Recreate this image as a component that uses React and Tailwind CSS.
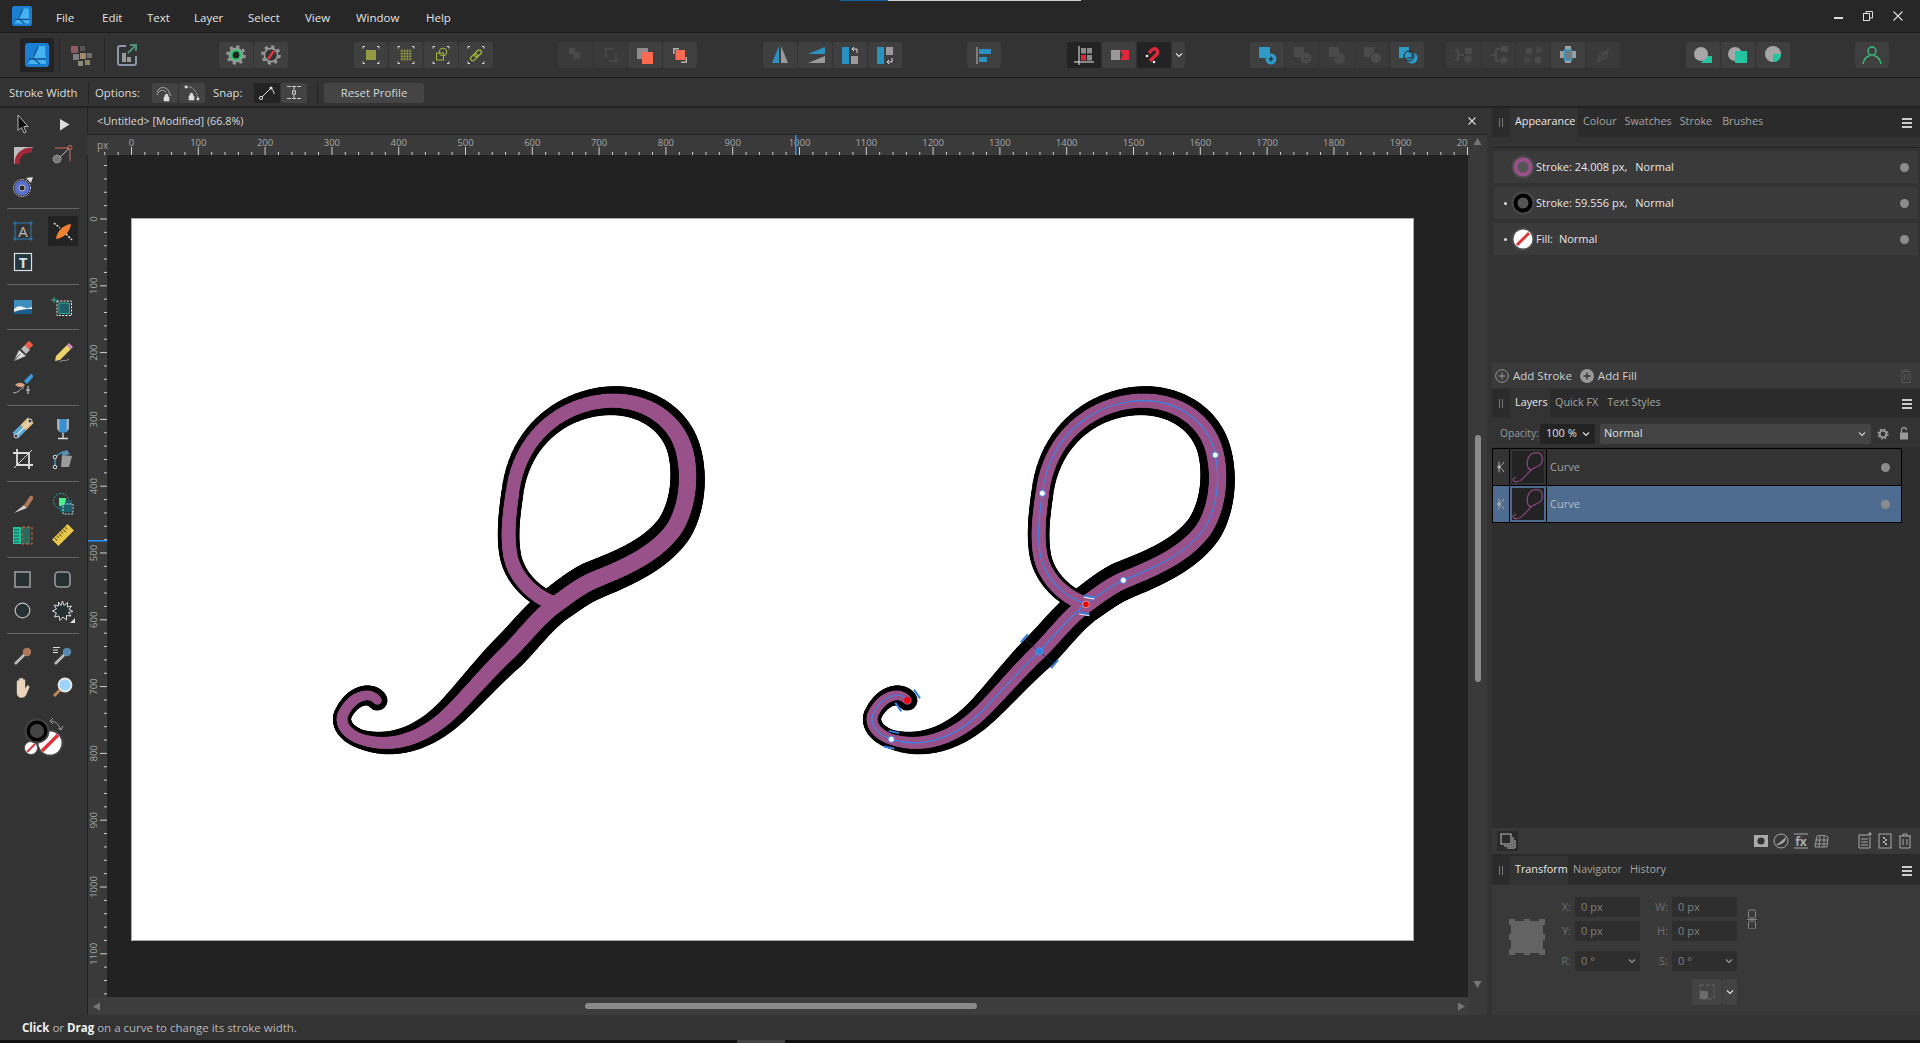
import React from 'react';

const SEGS = [
  [172, 991, 62, 26],
  [150, 962, 95, 975, 68, 1035, 54, 32],
  [58, 1068, 88, 1096, 124, 1108, 56, 32],
  [200, 1132, 300, 1120, 400, 1020, 92, 44],
  [452, 968, 512, 896, 568, 844, 112, 48],
  [612, 800, 655, 742, 708, 703, 110, 50],
  [740, 680, 780, 648, 820, 631, 116, 50],
  [900, 598, 1000, 560, 1060, 480, 110, 50],
  [1100, 420, 1112, 330, 1096, 255, 100, 52],
  [1075, 150, 980, 92, 880, 92, 87, 42],
  [750, 92, 600, 180, 577, 370, 66, 40],
  [570, 420, 560, 490, 570, 550, 64, 42],
  [580, 620, 640, 680, 708, 703, 60, 44],
];

const CURVE_D = 'M172 991' + SEGS.slice(1).map((s) => `C${s[0]} ${s[1]} ${s[2]} ${s[3]} ${s[4]} ${s[5]}`).join('');

// sample the beziers so the stroke width can change along the curve
function sampleCurve() {
  const out = [{ x: 172, y: 991, b: 62, p: 26 }];
  for (let i = 1; i < SEGS.length; i++) {
    const s = SEGS[i];
    const prev = SEGS[i - 1];
    const x0 = i === 1 ? prev[0] : prev[4];
    const y0 = i === 1 ? prev[1] : prev[5];
    const b0 = i === 1 ? prev[2] : prev[6];
    const p0 = i === 1 ? prev[3] : prev[7];
    for (let k = 1; k <= 24; k++) {
      const t = k / 24;
      const u = 1 - t;
      out.push({
        x: u * u * u * x0 + 3 * u * u * t * s[0] + 3 * u * t * t * s[2] + t * t * t * s[4],
        y: u * u * u * y0 + 3 * u * u * t * s[1] + 3 * u * t * t * s[3] + t * t * t * s[5],
        b: b0 + (s[6] - b0) * t,
        p: p0 + (s[7] - p0) * t,
      });
    }
  }
  return out;
}

const POINTS = sampleCurve();

function VarStroke({ k, color }) {
  return POINTS.slice(1).map((pt, i) => (
    <line key={i} x1={POINTS[i].x} y1={POINTS[i].y} x2={pt.x} y2={pt.y} stroke={color} strokeWidth={pt[k]} strokeLinecap="round" />
  ));
}

function Handle({ x, y, r, line }) {
  return (
    <g transform={`translate(${x} ${y}) rotate(${r})`}>
      <rect x="-16" y="-3" width="32" height="6" fill="#2f80e0" />
      {line && <rect x="-16" y="3" width="32" height="3" fill="#fff" />}
    </g>
  );
}

function Node({ x, y, fill }) {
  return <circle cx={x} cy={y} r="9" fill={fill} stroke="#4b8be0" strokeWidth="3" />;
}

function Artwork() {
  return (
    <svg width="1281" height="721" viewBox="0 0 1281 721" className="absolute inset-0">
      <g transform="translate(188 151) scale(0.33333)">
        <VarStroke k="b" color="#000" />
        <VarStroke k="p" color="#985189" />
      </g>
      <g transform="translate(718 151) scale(0.33333)">
        <VarStroke k="b" color="#000" />
        <VarStroke k="p" color="#985189" />
        <path d={CURVE_D} stroke="#3a86e8" strokeWidth="3.5" fill="none" />
        <line x1="520" y1="805" x2="612" y2="882" stroke="#1c3350" strokeWidth="2.5" />
        <Handle x={718} y={680} r={10} line />
        <Handle x={703} y={730} r={10} line />
        <Handle x={523} y={805} r={-50} />
        <Handle x={614} y={882} r={-50} />
        <Handle x={201} y={972} r={55} />
        <Handle x={145} y={1011} r={55} />
        <Handle x={132} y={1086} r={12} />
        <Handle x={117} y={1133} r={12} />
        <Node x={577} y={370} fill="#fff" />
        <Node x={1096} y={255} fill="#fff" />
        <Node x={820} y={631} fill="#fff" />
        <Node x={124} y={1108} fill="#fff" />
        <circle cx="568" cy="844" r="11" fill="#2f80e0" stroke="#5a9ae8" strokeWidth="2" />
        <circle cx="708" cy="703" r="10" fill="#f00000" stroke="#fff" strokeWidth="1.5" />
        <circle cx="172" cy="991" r="10" fill="#f00000" stroke="#d03060" strokeWidth="1.5" />
      </g>
    </svg>
  );
}

function HRuler() {
  const ticks = [];
  for (let u = -40; u <= 2000; u += 20) ticks.push(u);
  return (
    <svg width="1381" height="20" className="block shrink-0 bg-[#3a3a3a]">
      <defs>
        <clipPath id="hclip">
          <rect x="20" y="0" width="1361" height="20" />
        </clipPath>
      </defs>
      <text x="10" y="14" fontSize="10" fill="#a0a0a0" fontFamily="Open Sans">px</text>
      {ticks.map((u) => {
        const x = 44.5 + u * 0.668;
        return <line key={u} x1={x} x2={x} y1={u % 100 === 0 ? 12 : 17} y2="20" stroke="#d0d0d0" />;
      })}
      <g clipPath="url(#hclip)">
        {ticks.filter((u) => u % 100 === 0 && u >= 0).map((u) => (
          <text key={u} x={44.5 + u * 0.668} y="11" fontSize="9.5" fill="#a8a8a8" textAnchor="middle" fontFamily="Open Sans">{u}</text>
        ))}
      </g>
      <rect x="708" y="0" width="1.5" height="20" fill="#1e96ff" />
    </svg>
  );
}

function VRuler() {
  const ticks = [];
  for (let u = -80; u <= 1240; u += 20) ticks.push(u);
  return (
    <svg width="20" height="842" className="block shrink-0 bg-[#3a3a3a] border-l border-[#222]">
      {ticks.map((u) => {
        const y = 64 + u * 0.668;
        return <line key={u} y1={y} y2={y} x1={u % 100 === 0 ? 12 : 16} x2="20" stroke="#d0d0d0" />;
      })}
      {ticks.filter((u) => u % 100 === 0 && u >= 0 && u <= 1100).map((u) => {
        const y = 64 + u * 0.668;
        return (
          <text key={u} transform={`translate(9 ${y}) rotate(-90)`} fontSize="9.5" fill="#a8a8a8" textAnchor="middle" fontFamily="Open Sans">{u}</text>
        );
      })}
      <rect x="0" y="385" width="20" height="1.5" fill="#1e96ff" />
    </svg>
  );
}

const Dots = ({ n = 5, c = '#d6e04a', x = 17, y = 13, g = 2, sz = 1.1 }) => {
  const out = [];
  for (let i = 0; i < n; i++) for (let j = 0; j < n; j++) {
    out.push(<rect key={`${i}-${j}`} x={x - ((n - 1) * g) / 2 + i * g - sz / 2} y={y - ((n - 1) * g) / 2 + j * g - sz / 2} width={sz} height={sz} fill={c} />);
  }
  return out;
};

const Brackets = () => (
  <path d="M11 4.5H9V6.5M23 4.5H25V6.5M11 21.5H9V19.5M23 21.5H25V19.5" stroke="#ddd" strokeWidth="1" fill="none" />
);

const Gear = ({ children }) => (
  <>
    <circle cx="17" cy="13" r="7.5" fill="#9a9a9a" />
    <circle cx="17" cy="13" r="8.6" fill="none" stroke="#9a9a9a" strokeWidth="2.4" strokeDasharray="3.2 3.55" />
    {children}
  </>
);

// Toolbar icon shapes, drawn in the 34x26 box of a button
const TB = {
  settingsOn: <Gear><circle cx="17" cy="13" r="4.6" fill="#222" stroke="#2ec56f" strokeWidth="2.4" /></Gear>,
  settingsOff: <Gear><circle cx="17" cy="13" r="5.8" fill="#333" /><path d="M14 17L20 9" stroke="#e2383f" strokeWidth="2.4" /></Gear>,
  snap1: <><Brackets /><Dots sz={1.5} /></>,
  snap2: <><Brackets /><Dots n={7} g={1.6} sz={0.9} c="#cfd64a" /></>,
  snap3: <><Brackets /><rect x="12.5" y="11" width="7" height="7" stroke="#a6b934" fill="none" /><circle cx="19" cy="10" r="3.8" stroke="#a6b934" fill="none" /></>,
  snap4: <><Brackets /><g transform="rotate(-45 17 13)" stroke="#a6b934" fill="none" strokeWidth="1.2"><rect x="10" y="11" width="8" height="4.5" rx="2.2" /><rect x="15.5" y="11" width="8" height="4.5" rx="2.2" /></g></>,
  order1: <><rect x="11" y="6" width="6" height="6" fill="#4c4c4c" /><rect x="15" y="10" width="7" height="7" fill="#484848" /></>,
  order2: <><path d="M12 6h8v2h-6v8h-2z" fill="#484848" /><path d="M24 12v8h-8v-2h6v-6z" fill="#484848" /></>,
  order3: <><rect x="9" y="6" width="11" height="11" fill="#8c8c8c" /><rect x="14" y="10" width="11" height="12" fill="#fc6a54" /></>,
  order4: <><path d="M10 6h6v1.5h-4.5V12H10zM24 21h-6v-1.5h4.5V15H24z" fill="#b0b0b0" /><rect x="12.5" y="8" width="9.5" height="10" fill="#fc6a54" /></>,
  flipH: <><path d="M16 4V21H9z" fill="#2b91c0" /><path d="M18 4V21H25z" fill="#9a9a9a" /></>,
  flipV: <><path d="M27 5V12H10z" fill="#2b91c0" /><path d="M27 14V21H10z" fill="#9a9a9a" /></>,
  rotL: <><rect x="9" y="5" width="7" height="17" fill="#2b91c0" /><rect x="18" y="14" width="7" height="8" fill="#9a9a9a" /><path d="M24 11V7H19M21 5L19 7L21 9" stroke="#ddd" fill="none" /></>,
  rotR: <><rect x="9" y="5" width="7" height="17" fill="#2b91c0" /><rect x="18" y="5" width="7" height="8" fill="#9a9a9a" /><path d="M24 16V20H19M21 18L19 20L21 22" stroke="#ddd" fill="none" /></>,
  align: <><path d="M10 5V22" stroke="#bbb" /><rect x="12" y="7" width="12" height="5" fill="#2b91c0" /><rect x="12" y="15" width="8" height="5" fill="#2b91c0" /></>,
  grid: <><path d="M12 4V23M7 20H27" stroke="#eee" /><rect x="14" y="6" width="5" height="5.5" fill="#8c8c8c" /><rect x="20" y="6" width="5" height="5.5" fill="#8c8c8c" /><rect x="14" y="13" width="5" height="5.5" fill="#e0283c" /><rect x="20" y="13" width="5" height="5.5" fill="#8c8c8c" /></>,
  snapShape: <><rect x="9" y="8" width="9" height="10" fill="#999" /><path d="M18 8H27V18H18L21 13z" fill="#e0283c" /></>,
  magnet: <><path d="M13 19L20 12A3 3 0 0 0 15 8" stroke="#e0283c" strokeWidth="3.4" fill="none" /><path d="M15 8l-3 3" stroke="#e0283c" strokeWidth="3.4" /><circle cx="10" cy="14" r="1.3" fill="#eee" /><circle cx="17" cy="20" r="1.3" fill="#eee" /></>,
  add: <><rect x="9" y="5" width="11" height="11" fill="#2f9ac6" rx="1" /><circle cx="21" cy="17" r="5.5" fill="#2f9ac6" /><path d="M18.5 17H23.5M21 14.5V19.5" stroke="#222" strokeWidth="1.2" /></>,
  dis1: <><rect x="9" y="5" width="10" height="10" fill="#4a4a4a" /><circle cx="21" cy="16" r="5.5" fill="#4a4a4a" /><path d="M18 16.5h6" stroke="#3a3a3a" /></>,
  dis2: <><rect x="9" y="5" width="10" height="10" fill="#4a4a4a" /><path d="M19 11a5.5 5.5 0 1 1-5 5h5z" fill="#484848" /></>,
  dis3: <><rect x="9" y="5" width="10" height="10" fill="#4a4a4a" /><circle cx="21" cy="16" r="5.5" fill="#4d4d4d" stroke="#3a3a3a" /></>,
  divide: <><rect x="9" y="5" width="10" height="11" fill="#2f9ac6" /><circle cx="22" cy="16" r="5.6" fill="#2f9ac6" /><path d="M17 16h5V11" stroke="#222" fill="none" /><circle cx="19" cy="14" r="5" stroke="#222" fill="none" /></>,
  dis5: <><path d="M9 8h3v10H9M12 13h6" stroke="#5a5a5a" fill="none" /><rect x="19" y="6" width="7" height="6" fill="#4a4a4a" /><circle cx="22" cy="17" r="3.5" fill="#4a4a4a" /></>,
  dis6: <><path d="M15 7V19M10 13H15M15 7h5M15 19h5" stroke="#5a5a5a" fill="none" /><rect x="20" y="4" width="7" height="6" fill="#4a4a4a" /><circle cx="23" cy="18" r="3.5" fill="#4a4a4a" /></>,
  dis7: <><circle cx="13" cy="9" r="3.5" fill="#4a4a4a" /><rect x="20" y="5" width="6" height="6" fill="#454545" /><rect x="8" y="15" width="6" height="6" fill="#454545" /><circle cx="22" cy="18" r="3.5" fill="#4a4a4a" /></>,
  transform: <><path d="M9 9h5V4h6v5h5v7h-5v5h-6v-5H9z" fill="#a0a0a0" /><rect x="13.5" y="8" width="7" height="10" fill="#7a7a7a" stroke="#2f9ac6" strokeWidth="1.5" /></>,
  dis9: <path d="M10 20L24 7M13 13l8-4v6l-8 4z" stroke="#494949" fill="none" strokeWidth="1.5" />,
  bool1: <><path d="M21 14h5v7H15z" fill="#23c4a2" /><circle cx="15" cy="12" r="7" fill="#a6a6a6" /></>,
  bool2: <><circle cx="14" cy="12" r="7" fill="#a6a6a6" /><rect x="14" y="9" width="12" height="12" fill="#23c4a2" /></>,
  bool3: <><circle cx="17" cy="12" r="8" fill="#a6a6a6" /><path d="M17 12h8c0 5-2.5 7-6.5 8H17z" fill="#23c4a2" /></>,
  user: <><circle cx="17" cy="9" r="4" stroke="#35c27c" strokeWidth="1.4" fill="none" /><path d="M8 22C9 16 13 14 15 13.5M26 22C25 16 21 14 19 13.5" stroke="#35c27c" strokeWidth="1.4" fill="none" /></>,
};

function Btn({ name, dark, w = 34, dim }) {
  return (
    <div className={`h-[26px] rounded-[2px] shrink-0 ${dark ? 'bg-[#232323]' : dim ? 'bg-[#3a3a3a]' : 'bg-[#3f3f3f]'}`} style={{ width: w }}>
      {name && <svg viewBox="0 0 34 26" width="34" height="26">{TB[name]}</svg>}
    </div>
  );
}

function Group({ ml, children }) {
  return <div className="flex gap-[1px] shrink-0" style={{ marginLeft: ml }}>{children}</div>;
}

function Toolbar() {
  return (
    <div className="h-[44px] bg-[#333] flex items-center pl-[20px] shrink-0">
      <div className="w-[34px] h-[34px] bg-[#232323] rounded-[2px] flex items-center justify-center shrink-0">
        <LogoMark size={24} />
      </div>
      <div className="w-[1px] h-[34px] bg-[#232323] ml-[5px] shrink-0" />
      <div className="w-[44px] flex justify-center shrink-0">
        <svg width="22" height="26" viewBox="0 0 22 26">
          <rect x="0" y="4" width="7" height="7" fill="#8d5c63" rx="1" />
          <rect x="9" y="4" width="5" height="5" fill="#565656" />
          <rect x="2" y="12" width="6" height="6" fill="#7c7f84" />
          <rect x="9" y="11" width="6" height="6" fill="#9c8a6c" />
          <rect x="16" y="11" width="5" height="5" fill="#6f6f6f" />
          <rect x="7" y="19" width="5" height="5" fill="#8a8a7a" />
          <rect x="14" y="18" width="5" height="5" fill="#8f8463" />
        </svg>
      </div>
      <div className="w-[1px] h-[34px] bg-[#232323] shrink-0" />
      <div className="w-[44px] flex justify-center shrink-0">
        <svg width="22" height="26" viewBox="0 0 22 26" fill="none">
          <path d="M10 4H4a2 2 0 0 0-2 2v15a2 2 0 0 0 2 2h14a2 2 0 0 0 2-2v-7" stroke="#8e95ad" strokeWidth="2" />
          <rect x="6" y="11" width="4" height="9" fill="#9a9a9a" />
          <rect x="11" y="15" width="4" height="5" fill="#9a9a9a" />
          <path d="M12 11L19 4M14 3H20V9" stroke="#4f8f78" strokeWidth="2" />
        </svg>
      </div>
      <Group ml={70}><Btn name="settingsOn" /><Btn name="settingsOff" /></Group>
      <Group ml={66}><Btn name="snap1" /><Btn name="snap2" /><Btn name="snap3" /><Btn name="snap4" /></Group>
      <Group ml={65}><Btn name="order1" dim /><Btn name="order2" dim /><Btn name="order3" /><Btn name="order4" /></Group>
      <Group ml={66}><Btn name="flipH" /><Btn name="flipV" /><Btn name="rotL" /><Btn name="rotR" /></Group>
      <Group ml={65}><Btn name="align" /></Group>
      <Group ml={66}>
        <Btn name="grid" dark />
        <Btn name="snapShape" />
        <Btn name="magnet" dark />
        <div className="w-[13px] h-[26px] bg-[#3f3f3f] rounded-[2px] flex items-center justify-center">
          <Chevron />
        </div>
      </Group>
      <Group ml={65}><Btn name="add" /><Btn name="dis1" dim /><Btn name="dis2" dim /><Btn name="dis3" dim /><Btn name="divide" /></Group>
      <Group ml={22}><Btn name="dis5" dim /><Btn name="dis6" dim /><Btn name="dis7" dim /><Btn name="transform" /><Btn name="dis9" dim /></Group>
      <Group ml={66}><Btn name="bool1" /><Btn name="bool2" /><Btn name="bool3" /></Group>
      <Group ml={65}><Btn name="user" /></Group>
    </div>
  );
}

const Chevron = ({ c = '#ddd' }) => (
  <svg width="8" height="6" viewBox="0 0 8 6" fill="none"><path d="M1 1.5L4 4.5L7 1.5" stroke={c} strokeWidth="1.2" /></svg>
);

function LogoMark({ size }) {
  return (
    <svg width={size} height={size} viewBox="0 0 24 24">
      <rect x="0" y="0" width="24" height="24" rx="3" fill="#1a7fd0" />
      <path d="M3 21L14 3H20L21 21z" fill="#46b4f0" />
      <path d="M4 16H21M13 4L8 15L15 21" stroke="#0d4f8c" strokeWidth="1.3" fill="none" />
    </svg>
  );
}

function MenuBar() {
  const widths = { File: 46, Edit: 45, Text: 47, Layer: 54, Select: 57, View: 51, Window: 70, Help: 30 };
  return (
    <div className="h-[32px] bg-[#272727] flex items-center shrink-0 relative text-[11.5px] text-[#e4e4e4]">
      <div className="absolute top-0 left-[840px] w-[48px] h-[1px] bg-[#14629f]" />
      <div className="absolute top-0 left-[888px] w-[193px] h-[1px] bg-[#cfcfcf]" />
      <div className="w-[56px] pl-[12px] shrink-0"><LogoMark size={20} /></div>
      {Object.keys(widths).map((t) => (
        <div key={t} style={{ width: widths[t] }} className="shrink-0 pt-[3px]">{t}</div>
      ))}
      <div className="ml-auto flex items-center pr-[7px]">
        <div className="w-[30px] flex justify-center"><div className="w-[9px] h-[2px] bg-[#ddd] mt-[4px]" /></div>
        <div className="w-[30px] flex justify-center">
          <svg width="10" height="10" viewBox="0 0 10 10" fill="none" stroke="#ddd"><rect x="0.5" y="2.5" width="6" height="7" /><path d="M3 2.5V0.5H9.5V7H6.5" /></svg>
        </div>
        <div className="w-[30px] flex justify-center">
          <svg width="10" height="10" viewBox="0 0 10 10" stroke="#ddd" strokeWidth="1.1"><path d="M0.5 0.5L9.5 9.5M9.5 0.5L0.5 9.5" /></svg>
        </div>
      </div>
    </div>
  );
}

function CtxBtn({ dark, children }) {
  return <div className={`w-[26px] h-[20px] rounded-[2px] flex items-center justify-center shrink-0 ${dark ? 'bg-[#232323]' : 'bg-[#434343]'}`}>{children}</div>;
}

const Lock = ({ x, y }) => <path transform={`translate(${x} ${y})`} d="M1 4h5v4H1zM2 4V2.6a1.5 1.5 0 0 1 3 0V4" fill="#ddd" stroke="#ddd" strokeWidth="0.6" />;

function ContextBar() {
  return (
    <div className="h-[28px] bg-[#333] flex items-center shrink-0 text-[11.4px] text-[#dcdcdc] pt-[2px]">
      <div className="w-[88px] pl-[9px] shrink-0">Stroke Width</div>
      <div className="w-[1px] h-[22px] bg-[#232323] shrink-0" />
      <div className="w-[63px] pl-[6px] shrink-0">Options:</div>
      <div className="flex gap-[1px] shrink-0">
        <CtxBtn>
          <svg width="20" height="18" viewBox="0 0 20 18" fill="none">
            <path d="M2 8C4 3 9 2 13 6M2 11C4 6 8 5 11 8M13 6L16 12" stroke="#aaa" /><Lock x="8" y="9" />
          </svg>
        </CtxBtn>
        <CtxBtn>
          <svg width="20" height="18" viewBox="0 0 20 18" fill="none">
            <path d="M5 3C10 2 14 6 16 14" stroke="#aaa" strokeDasharray="2 1" /><circle cx="4" cy="3" r="1.4" fill="#ddd" /><circle cx="16" cy="15" r="1.4" fill="#ddd" /><Lock x="6" y="8" />
          </svg>
        </CtxBtn>
      </div>
      <div className="ml-[8px] w-[41px] shrink-0">Snap:</div>
      <div className="flex gap-[1px] shrink-0">
        <CtxBtn dark>
          <svg width="20" height="18" viewBox="0 0 20 18" fill="none">
            <path d="M5 13L14 4C16 6 17 8 17 10" stroke="#ddd" /><circle cx="4" cy="14" r="1.6" stroke="#ddd" /><circle cx="14" cy="4" r="1.6" fill="#ddd" />
          </svg>
        </CtxBtn>
        <CtxBtn>
          <svg width="20" height="18" viewBox="0 0 20 18" fill="none" stroke="#ccc">
            <path d="M3 2.5H17M3 14.5H17M10 3V7M10 10V14" strokeDasharray="4 1" /><rect x="8.5" y="7" width="3" height="3" />
          </svg>
        </CtxBtn>
      </div>
      <div className="w-[1px] h-[22px] bg-[#232323] shrink-0 ml-[10px]" />
      <div className="ml-[6px] w-[100px] h-[20px] bg-[#444] rounded-[2px] flex items-center justify-center shrink-0 text-[#d4d4d4]">Reset Profile</div>
    </div>
  );
}

// left tool icons, 24x24
const TI = {
  move: <path d="M7 3V18.5L10.5 15.5L13 21L15 20L12.8 14.5H17z" fill="#0d0d0d" stroke="#b8b8b8" />,
  node: <path d="M9 7V18.5L18.5 12.5z" fill="#dcdcdc" />,
  corner: <><path d="M3 4H22L20 7C11 7 6 12 5 21H3z" fill="#bdbdbd" /><path d="M6 21C6 12 12 7 21 7" stroke="#a32738" strokeWidth="5" fill="none" /></>,
  point: <><path d="M4 5H18M19 6V18" stroke="#dc6c5c" /><circle cx="19" cy="4.5" r="2" stroke="#dc6c5c" fill="none" /><path d="M9 14L18 5.5" stroke="#bbb" /><circle cx="6" cy="16" r="4" fill="#777" stroke="#bbb" strokeDasharray="1.5 1" /></>,
  contour: <><circle cx="11" cy="14" r="7.5" fill="#5a6ed0" /><circle cx="11" cy="14" r="8.5" stroke="#ddd" strokeDasharray="1.5 1.2" fill="none" /><circle cx="11" cy="14" r="3" fill="#2a2a2a" stroke="#bbb" /><path d="M15 4L22 3L20 9z" fill="#ddd" /></>,
  art: <><rect x="4" y="4" width="16" height="16" stroke="#2d6f9d" strokeWidth="1.2" fill="none" /><rect x="2.5" y="2.5" width="3" height="3" fill="#2d6f9d" /><rect x="18.5" y="2.5" width="3" height="3" fill="#2d6f9d" /><rect x="2.5" y="18.5" width="3" height="3" fill="#2d6f9d" /><rect x="18.5" y="18.5" width="3" height="3" fill="#2d6f9d" /><text x="12" y="18" textAnchor="middle" fontSize="15" fill="#bbb" fontFamily="Open Sans">A</text></>,
  width: <><path d="M5 20C6 12 12 6 20 5C19 13 13 19 5 20z" fill="#f08030" /><path d="M3 4L9 9M15 15L21 21" stroke="#ddd" strokeWidth="1.6" strokeDasharray="2 1.4" /></>,
  frame: <><rect x="3.5" y="3.5" width="17" height="17" fill="#24363f" stroke="#ddd" strokeWidth="1.2" /><text x="12" y="18" textAnchor="middle" fontSize="15" fontWeight="700" fill="#cfe0e8" fontFamily="Open Sans">T</text></>,
  image: <><rect x="3" y="5" width="18" height="14" fill="#3e8ec0" /><path d="M3 14C8 9 12 12 15 13S19 12 21 12V14C15 14 8 15 3 17z" fill="#f0f0f0" /><path d="M3 17C8 15 15 14 21 14V19H3z" fill="#1c5f8c" /></>,
  crop: <><rect x="6" y="6" width="14.5" height="14.5" stroke="#eee" strokeDasharray="2 1.3" fill="none" /><rect x="8" y="8" width="10.5" height="10.5" fill="#1f5f69" stroke="#2aa795" strokeWidth="1" /><path d="M3 2V8M0 5H6" stroke="#2ab59c" /></>,
  pen: <><path d="M3 21L8 10L15 16z" fill="#ddd" stroke="#777" strokeWidth="0.6" /><path d="M3 21L9 14" stroke="#555" /><path d="M10 9L14 5L19 10L15 14z" fill="#bbb" /><rect x="15" y="2" width="6" height="6" fill="#f25c43" transform="rotate(45 18 5)" /></>,
  pencil: <><path d="M5 16L16 5L20 9L9 20L4 21z" fill="#ebd26a" /><path d="M16 5L18 3L22 7L20 9z" fill="#dd8ad0" /><path d="M9 22C12 19 14 22 18 19" stroke="#999" fill="none" /></>,
  brush: <><path d="M13 10L20 3C22 3 22 5 22 6L16 13z" fill="#3a9be0" /><path d="M4 14C7 11 11 11 14 14C12 17 9 17 4 14z" fill="#d8a48a" /><path d="M2 22C8 22 9 17 13 17" stroke="#bbb" fill="none" /><path d="M17 15V23M15 19H19" stroke="#ddd" /></>,
  blend: <><g transform="rotate(45 12 12)"><rect x="8" y="1" width="8" height="11" fill="#e6c58a" /><rect x="8" y="12" width="8" height="11" fill="#5aa8d8" /></g><path d="M5 20L19 5" stroke="#ddd" strokeWidth="1.3" /><circle cx="19" cy="5" r="2" fill="#333" stroke="#ddd" /><circle cx="5" cy="20" r="2" fill="#333" stroke="#ddd" /></>,
  glass: <><path d="M6 3H18V11A6 6 0 0 1 6 11z" fill="#3a8fd0" /><path d="M6 3H8.5V15.5C7 14.5 6 13 6 11zM15.5 3H18V11C18 13 17 14.5 15.5 15.5z" fill="#a8b0b8" /><path d="M12 17V22M7 22.5H17" stroke="#ddd" strokeWidth="1.3" /></>,
  cropt: <><path d="M6 2V18H22M2 6H18V22" stroke="#ddd" strokeWidth="1.8" fill="none" /><path d="M21 3L3 21" stroke="#ddd" strokeWidth="1" /></>,
  bucket: <><path d="M11 8L21 9L18 20H10z" fill="#9c9c9c" /><path d="M10 5L16 3L19 7L12 9z" fill="#5a8fb0" /><path d="M4 19V10L11 5" stroke="#3a9bd0" strokeWidth="1.4" fill="none" /><circle cx="4" cy="20" r="1.8" fill="#333" stroke="#ddd" /><circle cx="4" cy="10" r="1.8" fill="#333" stroke="#ddd" /></>,
  knife: <><path d="M3 21L13 13L16 16z" fill="#cfcfcf" /><path d="M13 13L19 4C21 3 23 5 22 7L16 16z" fill="#b07858" /></>,
  select: <><circle cx="10" cy="9" r="7.5" stroke="#2aa8a8" strokeDasharray="2 1.3" fill="none" /><rect x="9" y="8" width="12" height="12" fill="#1f5f69" /><path d="M8 14V6H15C15 11 13 14 8 14z" fill="#4cf088" /><rect x="12" y="12" width="10" height="10" fill="none" stroke="#aef" strokeDasharray="2 1.3" /></>,
  pixel: <><rect x="2" y="4" width="8" height="17" fill="#21c2a0" /><path d="M3 7H8M3 10H8M3 13H8M3 16H8M3 19H8" stroke="#10604f" /><rect x="11" y="4" width="8" height="17" fill="#2f6f60" opacity="0.9" /><rect x="11" y="4" width="10" height="17" stroke="#e46a3c" strokeDasharray="3 2" fill="none" /></>,
  ruler: <g transform="rotate(-45 12 12)"><rect x="1" y="7.5" width="22" height="9" fill="#e8c84a" /><path d="M4 8V12M7 8V11M10 8V12M13 8V11M16 8V12M19 8V11" stroke="#6a5a20" /></g>,
  rect: <rect x="4" y="4" width="15" height="15" fill="#263033" stroke="#999" strokeWidth="1.6" />,
  rrect: <rect x="4" y="4" width="15" height="15" rx="3.5" fill="#263033" stroke="#999" strokeWidth="1.6" />,
  ellipse: <circle cx="11.5" cy="11.5" r="7.3" fill="#263033" stroke="#bbb" strokeWidth="1.2" />,
  star: <><circle cx="11.5" cy="11.5" r="6" fill="#263033" /><path d="M11.5 2L13 6.5L16.5 3.5L16.3 8L20.5 7L18 10.5L22 12.5L17.5 13.5L20 17L15.5 16.5L15.5 21L12 18L9 21.5L8 17L3.5 18L5.5 14L1.5 12L5.5 10L3 6L7.5 7L7.5 3L10 6.5z" fill="#263033" stroke="#ddd" strokeWidth="1" /><path d="M24 19V24H19z" fill="#ddd" /></>,
  picker: <><path d="M4 20L14 10" stroke="#bdbdbd" strokeWidth="2.6" /><circle cx="16" cy="8" r="4.2" fill="#b07858" /></>,
  style: <><path d="M4 20L14 10" stroke="#bdbdbd" strokeWidth="2.6" /><circle cx="16" cy="8" r="4.2" fill="#5a88b0" /><path d="M2 3.5H9M2 6H7M2 8.5H7" stroke="#ddd" /></>,
  hand: <path d="M6 12V6.5a1 1 0 0 1 2 0V12V4.5a1 1 0 0 1 2 0V12V4a1 1 0 0 1 2 0V12V5.5a1 1 0 0 1 2 0V14L16 11a1.3 1.3 0 0 1 2.2 1.2L15 20C14 22 12 22.5 10 22.5C7 22.5 6 20 6 18z" fill="#ecd4bc" stroke="#ecd4bc" strokeWidth="0.4" />,
  zoom: <><path d="M3 21L9 15" stroke="#c08858" strokeWidth="2.8" /><circle cx="14" cy="10" r="6.5" fill="#9ad4f8" stroke="#e8e8e8" strokeWidth="1.8" /></>,
};

function ToolRow({ a, b, active }) {
  return (
    <div className="h-[31px] flex shrink-0">
      <div className="w-[46px] flex items-center justify-center"><svg width="24" height="24" viewBox="0 0 24 24" overflow="visible">{TI[a]}</svg></div>
      <div className="w-[34px] flex items-center justify-center">
        {b && (
          <div className={`w-[30px] h-[30px] flex items-center justify-center rounded-[2px] ${active ? 'bg-[#232323]' : ''}`}>
            <svg width="24" height="24" viewBox="0 0 24 24" overflow="visible">{TI[b]}</svg>
          </div>
        )}
      </div>
    </div>
  );
}

const ToolSep = () => (
  <div className="h-[14px] flex items-center pl-[7px] shrink-0"><div className="w-[72px] h-[1px] bg-[#666]" /></div>
);

function ToolPanel() {
  return (
    <div className="w-[87px] shrink-0 bg-[#333] flex flex-col">
      <ToolRow a="move" b="node" />
      <ToolRow a="corner" b="point" />
      <ToolRow a="contour" />
      <ToolSep />
      <ToolRow a="art" b="width" active />
      <ToolRow a="frame" />
      <ToolSep />
      <ToolRow a="image" b="crop" />
      <ToolSep />
      <ToolRow a="pen" b="pencil" />
      <ToolRow a="brush" />
      <ToolSep />
      <ToolRow a="blend" b="glass" />
      <ToolRow a="cropt" b="bucket" />
      <ToolSep />
      <ToolRow a="knife" b="select" />
      <ToolRow a="pixel" b="ruler" />
      <ToolSep />
      <ToolRow a="rect" b="rrect" />
      <ToolRow a="ellipse" b="star" />
      <ToolSep />
      <ToolRow a="picker" b="style" />
      <ToolRow a="hand" b="zoom" />
      <svg width="87" height="62" viewBox="0 0 87 62" className="mt-[11px]">
        <circle cx="50" cy="30" r="13.5" fill="#444" />
        <circle cx="50" cy="30" r="11.5" fill="#fff" />
        <path d="M42 38L58 22" stroke="#e03038" strokeWidth="3.4" />
        <circle cx="31" cy="35" r="6.5" fill="#fff" stroke="#555" />
        <path d="M27 39L35 31" stroke="#e03038" strokeWidth="1.8" />
        <circle cx="37" cy="18" r="12.5" fill="#444" />
        <circle cx="37" cy="18" r="8.8" stroke="#000" strokeWidth="3.4" fill="none" />
        <path d="M50 8C55 8 59 11 61 17M50 8L53 5M50 8L53 11M61 17L58 15M61 17L63 13" stroke="#999" fill="none" />
      </svg>
    </div>
  );
}

const Tri = ({ r = 0 }) => (
  <svg width="9" height="9" viewBox="0 0 9 9" className="block" style={{ transform: `rotate(${r}deg)` }}><path d="M4.5 1L8.5 8H0.5z" fill="#777" /></svg>
);

function DocArea() {
  return (
    <div className="w-[1400px] shrink-0 flex flex-col">
      <div className="h-[27px] bg-[#333] border-b border-l border-[#232323] flex items-center justify-between pl-[9px] pr-[10px] text-[10.8px] text-[#d8d8d8] shrink-0">
        <span>{'<Untitled> [Modified] (66.8%)'}</span>
        <svg width="8" height="8" viewBox="0 0 8 8" stroke="#ddd" strokeWidth="1.1" className="mr-[1px]"><path d="M0.5 0.5L7.5 7.5M7.5 0.5L0.5 7.5" /></svg>
      </div>
      <div className="flex-1 flex min-h-0">
        <div className="w-[1381px] flex flex-col shrink-0">
          <HRuler />
          <div className="flex h-[842px] shrink-0">
            <VRuler />
            <div className="flex-1 bg-[#222] relative overflow-hidden">
              <div className="absolute left-[25px] top-[64px] w-[1281px] h-[721px] bg-white outline outline-1 outline-[#aaa]">
                <Artwork />
              </div>
            </div>
          </div>
          <div className="h-[18px] bg-[#3d3d3d] border-l border-[#222] flex items-center shrink-0 pl-[4px]">
            <Tri r={-90} />
            <div className="ml-[484px] w-[392px] h-[6px] bg-[#8a8a8a] rounded-full" />
            <div className="ml-[480px]"><Tri r={90} /></div>
          </div>
        </div>
        <div className="w-[19px] bg-[#3a3a3a] flex flex-col items-center shrink-0 pt-[2px]">
          <Tri />
          <div className="mt-[289px] w-[6px] h-[247px] bg-[#8a8a8a] rounded-full" />
          <div className="mt-[298px]"><Tri r={180} /></div>
        </div>
      </div>
    </div>
  );
}

function PanelTabs({ tabs, activeW, gaps }) {
  return (
    <div className="h-[29px] bg-[#2b2b2b] flex items-stretch shrink-0 text-[10.8px] relative">
      <div className="w-[18px] flex items-center justify-center shrink-0">
        <div className="w-[4px] h-[9px] border-x border-[#777]" />
      </div>
      <div className="bg-[#333] text-[#e8e8e8] flex items-center pl-[5px] pb-[3px] shrink-0" style={{ width: activeW }}>{tabs[0]}</div>
      {tabs.slice(1).map((t, i) => (
        <div key={t} className="flex items-center pb-[3px] text-[#a4a4a4] shrink-0" style={{ marginLeft: gaps[i] }}>{t}</div>
      ))}
      <div className="ml-auto mr-[8px] flex flex-col justify-center gap-[2px]">
        <div className="w-[10px] h-[2px] bg-[#ccc]" />
        <div className="w-[10px] h-[2px] bg-[#ccc]" />
        <div className="w-[10px] h-[2px] bg-[#ccc]" />
      </div>
    </div>
  );
}

function StrokeChip({ kind, color }) {
  return (
    <svg width="24" height="24" viewBox="0 0 24 24" className="shrink-0">
      <circle cx="12" cy="12" r="11.5" fill="#4a4a4a" />
      {kind === 'fill' ? (
        <>
          <circle cx="12" cy="12" r="9.5" fill="#fff" />
          <path d="M6 18L18 6" stroke="#e03038" strokeWidth="3" />
        </>
      ) : (
        <circle cx="12" cy="12" r="7.5" fill="#555" stroke={color} strokeWidth="4" />
      )}
    </svg>
  );
}

function AppRow({ bullet, chip, color, label, mode, modeGap }) {
  return (
    <div className="h-[32px] bg-[#3a3a3a] mx-[2px] flex items-center text-[11px] text-[#e6e6e6] relative shrink-0">
      <div className="w-[17px] flex justify-center shrink-0 pl-[5px]">
        {bullet && <div className="w-[3px] h-[3px] rounded-full bg-[#ddd]" />}
      </div>
      <StrokeChip kind={chip} color={color} />
      <span className="ml-[1px]">{label}</span>
      <span style={{ marginLeft: modeGap }}>{mode}</span>
      <div className="ml-auto mr-[9px] w-[9px] h-[9px] rounded-full bg-[#8c8c8c]" />
    </div>
  );
}

function LayerRow({ selected }) {
  return (
    <div className={`h-[37px] flex items-stretch border-b border-black ${selected ? 'bg-[#4d6c90]' : 'bg-[#333]'}`}>
      <div className="w-[17px] border-r border-black flex items-center justify-center shrink-0">
        <svg width="9" height="12" viewBox="0 0 9 12" fill="none" stroke="#aaa"><path d="M2 0.5V11.5M7 1C5 4 3 6 2 6C3 6 5 8 7 11" /><circle cx="2" cy="6" r="1.3" fill="#aaa" /></svg>
      </div>
      <div className="w-[37px] border-r border-black flex items-center justify-center shrink-0">
        <svg width="32" height="32" viewBox="30 40 1130 1120" className="bg-[#232323]">
          <path d={CURVE_D} fill="none" stroke="#8c4680" strokeWidth="42" />
        </svg>
      </div>
      <div className={`pl-[3px] flex-1 flex items-center text-[11px] ${selected ? 'text-[#b4bcc8]' : 'text-[#a0a0a0]'}`}>Curve</div>
      <div className="mr-[11px] self-center w-[9px] h-[9px] rounded-full bg-[#8c8c8c]" />
    </div>
  );
}

function Field({ label, value, labelW, ml, select }) {
  return (
    <div className="flex items-center shrink-0" style={{ marginLeft: ml }}>
      <span className="text-[11px] text-[#6e6e6e] text-right pr-[4px]" style={{ width: labelW }}>{label}</span>
      <div className="w-[65px] h-[20px] bg-[#2e2e2e] rounded-[2px] text-[11px] text-[#7e7e7e] pl-[6px] pr-[4px] flex items-center justify-between">
        <span>{value}</span>
        {select && <Chevron c="#999" />}
      </div>
    </div>
  );
}

function BottomIcon({ children, w = 20 }) {
  return (
    <svg width={w} height="18" viewBox="0 0 20 18" fill="none" className="shrink-0">{children}</svg>
  );
}

function RightPanels() {
  return (
    <div className="w-[428px] shrink-0 flex flex-col bg-[#333]">
      <PanelTabs tabs={['Appearance', 'Colour', 'Swatches', 'Stroke', 'Brushes']} activeW={68} gaps={[5, 8, 8, 10]} />
      <div className="h-[11px] border-b border-[#232323] shrink-0" />
      <div className="flex flex-col gap-[4px] pt-[3px]">
        <AppRow chip="stroke" color="#985189" label="Stroke: 24.008 px," mode="Normal" modeGap={8} />
        <AppRow bullet chip="stroke" color="#000" label="Stroke: 59.556 px," mode="Normal" modeGap={8} />
        <AppRow bullet chip="fill" label="Fill:" mode="Normal" modeGap={6} />
      </div>
      <div className="h-[108px] shrink-0" />
      <div className="h-[25px] bg-[#3a3a3a] flex items-center text-[11.5px] text-[#cfcfcf] shrink-0 pl-[3px]">
        <svg width="14" height="14" viewBox="0 0 14 14" fill="none" className="shrink-0"><circle cx="7" cy="7" r="6.3" stroke="#999" /><path d="M3.5 7H10.5M7 3.5V10.5" stroke="#999" /></svg>
        <span className="ml-[4px]">Add Stroke</span>
        <svg width="14" height="14" viewBox="0 0 14 14" className="shrink-0 ml-[8px]"><circle cx="7" cy="7" r="7" fill="#999" /><path d="M3.5 7H10.5M7 3.5V10.5" stroke="#333" strokeWidth="1.4" /></svg>
        <span className="ml-[4px]">Add Fill</span>
        <svg width="12" height="14" viewBox="0 0 12 14" fill="none" stroke="#555" className="ml-auto mr-[8px]"><path d="M1 2.5H11M4 2.5V1H8V2.5M2 2.5V13.5H10V2.5M4.5 5V11M7.5 5V11" /></svg>
      </div>
      <div className="h-[1px] shrink-0" />
      <PanelTabs tabs={['Layers', 'Quick FX', 'Text Styles']} activeW={40} gaps={[5, 9]} />
      <div className="h-[29px] flex items-center shrink-0 text-[11px] pt-[2px]">
        <span className="ml-[8px] w-[40px] text-[#9a9a9a] text-[10.2px]">Opacity:</span>
        <div className="w-[55px] h-[20px] bg-[#232323] rounded-[2px] flex items-center justify-between pl-[6px] pr-[5px] text-[#e0e0e0] shrink-0">
          <span>100 %</span><Chevron />
        </div>
        <div className="ml-[5px] w-[271px] h-[20px] bg-[#444] rounded-[2px] flex items-center justify-between pl-[4px] pr-[5px] text-[#e0e0e0] shrink-0">
          <span>Normal</span><Chevron c="#ccc" />
        </div>
        <svg width="12" height="12" viewBox="0 0 12 12" className="ml-[6px] shrink-0"><circle cx="6" cy="6" r="3.4" stroke="#9a9a9a" strokeWidth="2" fill="none" /><circle cx="6" cy="6" r="4.8" stroke="#9a9a9a" strokeWidth="1.6" strokeDasharray="1.8 1.97" fill="none" /></svg>
        <svg width="10" height="13" viewBox="0 0 10 13" className="ml-[10px] shrink-0"><path d="M1 5.5H9V12.5H1z" fill="#9a9a9a" /><path d="M2.5 5.5V3a2.5 2.5 0 0 1 5 0" stroke="#9a9a9a" strokeWidth="1.3" fill="none" /></svg>
      </div>
      <div className="flex-1 bg-[#2e2e2e] pt-[1px] min-h-0">
        <div className="w-[410px] border border-black border-b-0">
          <LayerRow />
          <LayerRow selected />
        </div>
      </div>
      <div className="h-[26px] bg-[#383838] flex items-center shrink-0">
        <div className="ml-[5px] w-[21px] h-[20px] bg-[#2a2a2a] flex items-center justify-center shrink-0">
          <svg width="16" height="16" viewBox="0 0 16 16" fill="none" stroke="#bbb"><rect x="1" y="1" width="10" height="10" /><path d="M13 4V13H4M15 7V15H7" /></svg>
        </div>
        <div className="ml-auto flex items-center mr-[5px]">
          <BottomIcon><rect x="3" y="3" width="14" height="12" fill="#aaa" /><circle cx="10" cy="9" r="3.6" fill="#333" /></BottomIcon>
          <BottomIcon><circle cx="10" cy="9" r="7" stroke="#aaa" /><path d="M5 13C8 11 12 8 15 5C15 9 12 13 5 13z" fill="#aaa" /></BottomIcon>
          <BottomIcon><path d="M3 2H17M3 16H17" stroke="#aaa" /><text x="10" y="13.5" fontSize="12" fontWeight="700" fill="#aaa" textAnchor="middle" fontFamily="Open Sans">fx</text></BottomIcon>
          <BottomIcon><path d="M4 15L6 4C10 3 14 3 17 5L16 15zM4 8H17M3.5 12H17M9 3.5L8 15M13 3.5L13 15" stroke="#999" /></BottomIcon>
          <div className="w-[24px]" />
          <BottomIcon><path d="M14 3H4V16H15V5M6 7H13M6 10H13M6 13H13M15 0V4M13 2H17" stroke="#aaa" /></BottomIcon>
          <BottomIcon><rect x="4" y="2" width="12" height="14" stroke="#aaa" /><path d="M8 5H10V7H8zM10 7H12V9H10zM8 9H10V11H8zM10 11H12V13H10z" fill="#aaa" /></BottomIcon>
          <BottomIcon><path d="M4 4H16M8 4V2H12V4M5 4V16H15V4M8 7V13M12 7V13" stroke="#aaa" /></BottomIcon>
        </div>
      </div>
      <div className="h-[2px] bg-[#2a2a2a] shrink-0" />
      <PanelTabs tabs={['Transform', 'Navigator', 'History']} activeW={58} gaps={[5, 8]} />
      <div className="h-[130px] bg-[#393939] flex shrink-0 pt-[12px]">
        <svg width="36" height="36" viewBox="0 0 36 36" className="ml-[17px] mt-[22px] shrink-0">
          <path d="M0 0H6V2H15V0H21V2H30V0H36V6H34V15H36V21H34V30H36V36H30V34H21V36H15V34H6V36H0V30H2V21H0V15H2V6H0z" fill="#636363" />
        </svg>
        <div className="ml-[12px] flex flex-col">
          <div className="flex">
            <Field label="X:" value="0 px" labelW={18} />
            <Field label="W:" value="0 px" labelW={32} />
            <div className="h-[20px] ml-[10px]">
              <svg width="10" height="20" viewBox="0 0 10 20" fill="none" stroke="#888" className="mt-[12px]"><rect x="1.5" y="1" width="7" height="8" rx="1.5" /><rect x="1.5" y="12" width="7" height="8" rx="1.5" /><path d="M0 10.5H10" /></svg>
            </div>
          </div>
          <div className="flex mt-[4px]"><Field label="Y:" value="0 px" labelW={18} /><Field label="H:" value="0 px" labelW={32} /></div>
          <div className="flex mt-[10px]"><Field label="R:" value="0 °" labelW={18} select /><Field label="S:" value="0 °" labelW={32} select /></div>
          <div className="flex mt-[8px] ml-[135px] gap-[1px]">
            <div className="w-[30px] h-[26px] bg-[#434343] rounded-[2px] flex items-center justify-center">
              <svg width="16" height="16" viewBox="0 0 16 16" fill="none"><rect x="1" y="1" width="14" height="14" stroke="#666" strokeDasharray="4 2" /><rect x="1" y="7" width="8" height="8" rx="1.5" fill="#6c6c6c" /></svg>
            </div>
            <div className="w-[14px] h-[26px] bg-[#434343] rounded-[2px] flex items-center justify-center"><Chevron /></div>
          </div>
        </div>
      </div>
    </div>
  );
}

export default function App() {
  return (
    <div className="w-[1920px] h-[1043px] flex flex-col bg-[#101010] overflow-hidden font-['Open_Sans',sans-serif]">
      <MenuBar />
      <div className="h-[1px] bg-[#1c1c1c] shrink-0" />
      <Toolbar />
      <div className="h-[1px] bg-[#1c1c1c] shrink-0" />
      <ContextBar />
      <div className="h-[2px] bg-[#232323] shrink-0" />
      <div className="h-[907px] flex shrink-0">
        <ToolPanel />
        <DocArea />
        <div className="w-[5px] bg-[#333] shrink-0" />
        <RightPanels />
      </div>
      <div className="h-[25px] bg-[#333] flex items-center pl-[22px] pt-[1px] text-[11.5px] text-[#b8b8b8] shrink-0">
        <span><b className="font-bold text-[#f0f0f0]">Click</b> or <b className="font-bold text-[#f0f0f0]">Drag</b> on a curve to change its stroke width.</span>
      </div>
      <div className="h-[3px] flex shrink-0">
        <div className="ml-[737px] w-[48px] bg-[#444]" />
      </div>
    </div>
  );
}
